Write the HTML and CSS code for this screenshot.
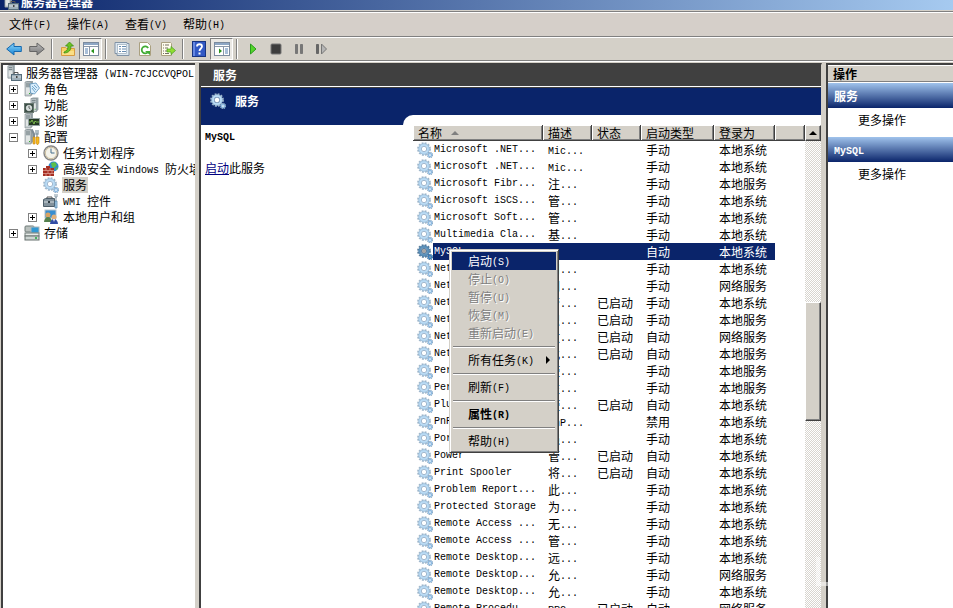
FILE: index.html
```html
<!DOCTYPE html>
<html lang="zh-CN">
<head>
<meta charset="utf-8">
<title>服务器管理器</title>
<link rel="stylesheet" href="styles.css">
</head>
<body>
<svg class="defs" aria-hidden="true">
  <defs>
    <linearGradient id="blue" x2="0" y2="1"><stop offset="0" stop-color="#8fd8fb"/><stop offset="1" stop-color="#1583d6"/></linearGradient>
    <linearGradient id="grey" x2="0" y2="1"><stop offset="0" stop-color="#bbb"/><stop offset="1" stop-color="#777"/></linearGradient>
    <symbol id="gear" viewBox="0 0 16 16">
      <circle cx="7" cy="7" r="6" fill="none" stroke="#9db4c8" stroke-width="1.800" stroke-dasharray="1.880 1.260"/>
      <circle cx="7" cy="7" r="4.200" fill="none" stroke="#b9dbf5" stroke-width="2.600"/>
      <circle cx="7" cy="7" r="5.300" fill="none" stroke="#8fb0cd" stroke-width=".6"/>
      <circle cx="7" cy="7" r="2.700" fill="#fff" stroke="#86a5c1" stroke-width=".8"/>
      <circle cx="13" cy="13" r="2.600" fill="none" stroke="#8eabc5" stroke-width="1.200" stroke-dasharray="1.300 .740"/>
      <circle cx="13" cy="13" r="1.600" fill="#fff" stroke="#8ebbe2" stroke-width="1.500"/>
    </symbol>
    <symbol id="server" viewBox="0 0 16 16">
      <path d="M1 1l2-1h6v13l-2 2H1z" fill="#9aa6aa"/><path d="M1 1h6v14H1z" fill="#c6ced0" stroke="#7c888c" stroke-width=".6"/>
      <path d="M2 3h4M2 5h4" stroke="#667479"/><path d="M2 7h4v6H2z" fill="#e1e5e4"/><path d="M5 12h1v1H5z" fill="#35ad35"/>
    </symbol>
    <symbol id="manager" viewBox="0 0 16 16">
      <use href="#server" width="16" height="14"/><path d="M8 9v-1.500h4V9" fill="none" stroke="#555"/><rect x="5.500" y="9.500" width="10" height="6" fill="#9fb0ba" stroke="#566d7b"/><path d="M6 12h9" stroke="#d5dce0"/><path d="M10 11h1.500v2H10z" fill="#444"/>
    </symbol>
    <symbol id="roles" viewBox="0 0 16 16">
      <use href="#server" width="16" height="16"/><path d="M6 3l6-1 3.500 5-5 6-4-1z" fill="#d9edfb" stroke="#5790bb" stroke-width=".8"/><path d="M8 5l4 4M8 7l3 4M10 4l3 3" stroke="#75a9cc"/>
    </symbol>
    <symbol id="features" viewBox="0 0 16 16">
      <use href="#server" x="6" width="15" height="16"/><rect x=".5" y="6.500" width="9" height="9" fill="#3e5048" stroke="#687770"/><circle cx="5" cy="11" r="2.800" fill="#d3dcda" stroke="#fff" stroke-width=".5"/><path d="M5 9v2l1.500 1" fill="none" stroke="#333" stroke-width=".7"/>
    </symbol>
    <symbol id="diag" viewBox="0 0 16 16">
      <use href="#server" width="16" height="16"/><rect x="4.500" y="5.500" width="11" height="7" fill="#243923" stroke="#95a3a3"/><path d="M5 9h2l1-2 2 4 1-3 1 1h3" fill="none" stroke="#8cd155" stroke-width=".8"/>
    </symbol>
    <symbol id="config" viewBox="0 0 16 16">
      <use href="#server" width="16" height="16"/><path d="M8 1l2 4v9" fill="none" stroke="#7d8b95" stroke-width="2"/><path d="M12 1v4h2V1M13 5v3" fill="none" stroke="#879ba7" stroke-width="1.300"/><path d="M9 8h2v7H9zM12 8h3v6l-1 1.500h-1L12 14z" fill="#f6b921" stroke="#c28317" stroke-width=".6"/>
    </symbol>
    <symbol id="clock" viewBox="0 0 16 16">
      <circle cx="8" cy="8" r="7" fill="#f4f3ea" stroke="#858585" stroke-width="1.400"/><circle cx="8" cy="8" r="5.700" fill="none" stroke="#cdbf9e"/><path d="M8 3.500V8h3.500" fill="none" stroke="#426c8d"/>
    </symbol>
    <symbol id="firewall" viewBox="0 0 16 16">
      <circle cx="10.500" cy="5.500" r="5" fill="#2f88cd"/><path d="M8 2l4-1 2 3-3 3-2-1zM12 8l3-2-1 3z" fill="#5bc04a"/><path d="M0 7h3V5h4v2h4v8H0z" fill="#a62f24"/><path d="M0 9.500h11M0 12.500h11M3 7v2.500M7 7v2.500M5 9.500v3M9 9.500v3M3 12.500V15M7 12.500V15" stroke="#e4aba1" stroke-width=".7"/>
    </symbol>
    <symbol id="wmi" viewBox="0 0 16 16">
      <path d="M4 6V4h5v2" fill="none" stroke="#555"/><path d="M.5 6.500l2-1h9v8H.5z" fill="#82919b" stroke="#4d5e69"/><path d="M1 9h10" stroke="#d1d9dd"/><path d="M5 8h2v2H5z" fill="#303b42"/><path d="M12 1v3h2V1M13 4v4" fill="none" stroke="#8598a5"/><path d="M12 8h2v7h-2z" fill="#b2d5ef" stroke="#467aa2" stroke-width=".7"/>
    </symbol>
    <symbol id="users" viewBox="0 0 16 16">
      <rect x="2" y="1" width="11" height="8" fill="#398fd1" stroke="#b8c3cc"/><circle cx="5" cy="6" r="2.500" fill="#d8a363"/><path d="M1 13c0-3 2-5 4-5s4 2 4 5z" fill="#54804d"/><circle cx="11" cy="8" r="2.500" fill="#e2b17b"/><path d="M7 15c0-3 2-5 4-5s4 2 4 5z" fill="#324da5"/><path d="M10 10l1 3 1-3z" fill="#fff"/>
    </symbol>
    <symbol id="storage" viewBox="0 0 16 16">
      <rect x="1" y="1" width="9" height="6" rx="1" fill="#b9c0bd" stroke="#6d7876"/><rect x="7" y="2" width="8" height="6" fill="#3298d3" stroke="#aab5b9"/><rect x="1" y="8" width="14" height="3" fill="#e6eae8" stroke="#737e7a"/><rect x="1" y="11" width="14" height="4" fill="#cdd5d2" stroke="#66716e"/><path d="M11 13h2" stroke="#1ca83b" stroke-width="1.500"/>
    </symbol>
    <symbol id="back" viewBox="0 0 16 16"><path d="M.7 8L8 2v3.500h7.300v5H8V14z" fill="url(#blue)" stroke="#1769ae"/></symbol>
    <symbol id="forward" viewBox="0 0 16 16"><path d="M15.300 8L8 2v3.500H.7v5H8V14z" fill="url(#grey)" stroke="#666"/></symbol>
    <symbol id="up" viewBox="0 0 16 16"><path d="M1.500 6.500h4l1 1h8v7h-13z" fill="#f8d264" stroke="#d79b42"/><path d="M2 10h12v4H2z" fill="#fbdf86"/><path d="M4 11c3-1 4-3 4-6H5.500L9.500 1l4 4H11c0 4-2 7-7 7z" fill="#6cc323" stroke="#36880f" stroke-width=".7"/></symbol>
    <symbol id="pane" viewBox="0 0 16 16"><rect x=".5" y="1.500" width="15" height="13" fill="#fff" stroke="#7c8b9e"/><path d="M1 2h14v2H1z" fill="#8ea7c5"/><path d="M1 5.500h14M6.500 6v8" stroke="#8b98aa"/><path d="M2 8h3M2 10h3M2 12h3" stroke="#527fb0"/><path d="M11 7.500v5L8 10z" fill="#29931c"/></symbol>
    <symbol id="props" viewBox="0 0 16 16"><path d="M1 1.500h12v1h2v12H3v-2H1z" fill="#dce7f0" stroke="#8193a6"/><rect x="3.500" y="3.500" width="9" height="9" fill="#fff" stroke="#9aabba" stroke-width=".7"/><path d="M5 5.500h2M8 5.500h4M5 8h2M8 8h4M5 10.500h2M8 10.500h4" stroke="#668bb0"/></symbol>
    <symbol id="refresh" viewBox="0 0 16 16"><path d="M2.500 1.500h8l3 3v10h-11z" fill="#fff" stroke="#aaa080"/><path d="M11.200 7A3.500 3.500 0 1 0 11 11" fill="none" stroke="#42ac35" stroke-width="1.800"/><path d="M8 10h5v4z" fill="#42ac35"/></symbol>
    <symbol id="export" viewBox="0 0 16 16"><path d="M1.500 1.500h9l1 1v12h-10z" fill="#fffdec" stroke="#aaa080"/><path d="M3 4h1M5 4h4M3 7h1M5 7h3M3 10h1M5 10h3M3 12.500h1M5 12.500h4" stroke="#776f65"/><path d="M7 8h4V5.500L15.500 9.500 11 13.500V11H7z" fill="#91dd32" stroke="#459d20" stroke-width=".7"/></symbol>
    <symbol id="help" viewBox="0 0 16 16"><rect x="1.500" y=".5" width="13" height="15" fill="#3259c4" stroke="#173481"/><path d="M2 1h2v14H2z" fill="#6587e1"/><path d="M6 5.500c0-3 5-3 5 0 0 2-2.500 2-2.500 4.500" fill="none" stroke="#fff" stroke-width="1.800"/><path d="M7.500 11.500h2v2h-2z" fill="#fff"/></symbol>
    <symbol id="play" viewBox="0 0 16 16"><path d="M5.500 3v10l5.500-5z" fill="#55d52b" stroke="#299c1e"/></symbol>
    <symbol id="stop" viewBox="0 0 16 16"><rect x="3" y="3" width="10" height="10" rx="1" fill="#3d3d3d" stroke="#777"/></symbol>
    <symbol id="pause" viewBox="0 0 16 16"><path d="M4.500 3.500h2v9h-2zM9.500 3.500h2v9h-2z" fill="#777" stroke="#777"/></symbol>
    <symbol id="restart" viewBox="0 0 16 16"><path d="M2.500 3.500h2v9h-2z" fill="#666" stroke="#666"/><path d="M7.500 3v10l5-5z" fill="#b5b5b5" stroke="#777"/></symbol>
  </defs>
</svg>

<header class="title"><svg class="icon"><use href="#manager"/></svg><h1>服务器管理器</h1></header>

<nav class="menubar">
  <button>文件<span class="en">(F)</span></button>
  <button>操作<span class="en">(A)</span></button>
  <button>查看<span class="en">(V)</span></button>
  <button>帮助<span class="en">(H)</span></button>
</nav>

<div class="toolbar">
  <button aria-label="后退"><svg class="icon"><use href="#back"/></svg></button>
  <button aria-label="前进"><svg class="icon"><use href="#forward"/></svg></button>
  <i class="divider"></i>
  <button aria-label="向上"><svg class="icon"><use href="#up"/></svg></button>
  <button class="pressed" aria-label="控制台树"><svg class="icon"><use href="#pane"/></svg></button>
  <i class="divider"></i>
  <button aria-label="属性"><svg class="icon"><use href="#props"/></svg></button>
  <button aria-label="刷新"><svg class="icon"><use href="#refresh"/></svg></button>
  <button aria-label="导出列表"><svg class="icon"><use href="#export"/></svg></button>
  <i class="divider"></i>
  <button aria-label="帮助"><svg class="icon"><use href="#help"/></svg></button>
  <button class="pressed" aria-label="操作窗格"><svg class="icon flip"><use href="#pane"/></svg></button>
  <i class="divider"></i>
  <button aria-label="启动服务"><svg class="icon"><use href="#play"/></svg></button>
  <button aria-label="停止服务"><svg class="icon"><use href="#stop"/></svg></button>
  <button aria-label="暂停服务"><svg class="icon"><use href="#pause"/></svg></button>
  <button aria-label="重新启动服务"><svg class="icon"><use href="#restart"/></svg></button>
</div>

<main class="workspace">
  <aside class="tree">
    <ul>
      <li class="root"><svg class="icon"><use href="#manager"/></svg><span>服务器管理器<span class="en"> (WIN-7CJCCVQPOL</span></span></li>
      <li><button class="toggle" aria-label="展开"></button><svg class="icon"><use href="#roles"/></svg><span>角色</span></li>
      <li><button class="toggle" aria-label="展开"></button><svg class="icon"><use href="#features"/></svg><span>功能</span></li>
      <li><button class="toggle" aria-label="展开"></button><svg class="icon"><use href="#diag"/></svg><span>诊断</span></li>
      <li><button class="toggle open" aria-label="折叠"></button><svg class="icon"><use href="#config"/></svg><span>配置</span></li>
      <li class="sub"><button class="toggle" aria-label="展开"></button><svg class="icon"><use href="#clock"/></svg><span>任务计划程序</span></li>
      <li class="sub"><button class="toggle" aria-label="展开"></button><svg class="icon"><use href="#firewall"/></svg><span>高级安全<span class="en"> Windows </span>防火墙</span></li>
      <li class="sub"><i class="leaf"></i><svg class="icon"><use href="#gear"/></svg><span class="current">服务</span></li>
      <li class="sub"><i class="leaf"></i><svg class="icon"><use href="#wmi"/></svg><span><span class="en">WMI </span>控件</span></li>
      <li class="sub"><button class="toggle" aria-label="展开"></button><svg class="icon"><use href="#users"/></svg><span>本地用户和组</span></li>
      <li><button class="toggle" aria-label="展开"></button><svg class="icon"><use href="#storage"/></svg><span>存储</span></li>
    </ul>
  </aside>

  <section class="center">
    <h2 class="heading">服务</h2>
    <div class="banner"><svg class="icon"><use href="#gear"/></svg><strong>服务</strong></div>
    <div class="content">
      <div class="detail">
        <h3><span class="en">MySQL</span></h3>
        <p><a href="#start">启动</a>此服务</p>
      </div>
      <div class="list">
        <table>
          <colgroup><col class="c-name"><col class="c-small"><col class="c-small"><col class="c-type"><col class="c-login"><col></colgroup>
          <thead><tr><th>名称<i class="sort"></i></th><th>描述</th><th>状态</th><th>启动类型</th><th>登录为</th><th></th></tr></thead>
          <tbody id="services"></tbody>
        </table>
        <div class="scroll"><button aria-label="向上滚动"></button><div class="track"><div class="thumb"></div></div></div>
      </div>
    </div>
  </section>

  <aside class="actions">
    <h2>操作</h2>
    <h3>服务</h3>
    <a href="#more">更多操作</a>
    <h3><span class="en">MySQL</span></h3>
    <a href="#more">更多操作</a>
  </aside>
</main>

<div class="menu" role="menu">
  <button class="active">启动<span class="en">(S)</span></button>
  <button disabled>停止<span class="en">(O)</span></button>
  <button disabled>暂停<span class="en">(U)</span></button>
  <button disabled>恢复<span class="en">(M)</span></button>
  <button disabled>重新启动<span class="en">(E)</span></button>
  <hr>
  <button class="more">所有任务<span class="en">(K)</span></button>
  <hr>
  <button>刷新<span class="en">(F)</span></button>
  <hr>
  <button class="default">属性<span class="en">(R)</span></button>
  <hr>
  <button>帮助<span class="en">(H)</span></button>
</div>
<div class="mark"></div>
<script src="services.js"></script>
</body>
</html>
```

FILE: styles.css
```css
* { box-sizing: border-box; }

body {
  margin: 0;
  height: 100vh;
  display: flex;
  flex-direction: column;
  overflow: hidden;
  background: #d4d0c8;
  color: #000;
  font: 12px/16px "Noto Sans CJK SC", sans-serif;
}

h1, h2, h3, p, ul { margin: 0; padding: 0; font-size: 12px; }
button { padding: 0; border: 0; background: none; color: inherit; font: inherit; }
.en { font-family: "Liberation Mono", monospace; font-size: 10px; line-height: 10px; vertical-align: 1px; white-space: pre; }
.defs { position: absolute; width: 0; height: 0; }
.icon { flex: none; width: 16px; height: 16px; display: block; }
.flip { transform: scaleX(-1); }

.title {
  display: flex;
  align-items: flex-end;
  gap: 2px;
  flex: none;
  height: 10px;
  padding-left: 3px;
  overflow: hidden;
  color: #fff;
  background: linear-gradient(90deg, #0a246a, #a6caf0);
}
.title h1 { line-height: 16px; }

.menubar {
  display: flex;
  flex: none;
  height: 26px;
  margin-top: 1px;
  padding-left: 1px;
  border-top: 1px solid #808080;
  border-bottom: 1px solid #808080;
  box-shadow: inset 0 1px #fff;
  background: #d5cfc9;
}
.menubar button { padding: 0 8px; white-space: nowrap; }

.toolbar {
  display: flex;
  align-items: center;
  flex: none;
  height: 24px;
  padding-left: 2px;
  border-top: 1px solid #fff;
  border-bottom: 1px solid #808080;
}
.toolbar button { display: grid; place-items: center; width: 23px; height: 22px; }
.toolbar .pressed { border: 1px solid; border-color: #808080 #fff #fff #808080; background: #eae8e4; }
.divider { width: 2px; height: 20px; margin: 0 3px; border-left: 1px solid #808080; border-right: 1px solid #fff; }

.workspace {
  flex: 1;
  min-height: 0;
  display: grid;
  grid-template-columns: 194px minmax(0, 1fr) 127px;
  gap: 4px;
  padding: 1px 0 0 1px;
  border-top: 1px solid #fff;
}
.workspace > * { overflow: hidden; border-top: 2px solid #404040; border-left: 2px solid #404040; background: #fff; }

.tree ul { list-style: none; }
.tree li { display: flex; align-items: center; height: 16px; padding-left: 6px; gap: 4px; white-space: nowrap; }
.tree .root { padding-left: 3px; }
.tree .sub { padding-left: 25px; }
.toggle, .leaf { flex: none; width: 9px; height: 9px; margin-right: 2px; }
.toggle {
  border: 1px solid #808080;
  background: linear-gradient(#000, #000) center / 5px 1px no-repeat, linear-gradient(#000, #000) center / 1px 5px no-repeat;
}
.toggle.open { background: linear-gradient(#000, #000) center / 5px 1px no-repeat; }
.current { padding: 0 1px; margin-left: -1px; background: #d4d0c8; }

.center { display: flex; flex-direction: column; border-right: 1px solid #d4d0c8; }
.heading { flex: none; height: 21px; padding-left: 12px; line-height: 20px; color: #fff; background: #404040; }
.banner {
  display: flex;
  align-items: flex-start;
  gap: 9px;
  flex: none;
  height: 38px;
  margin-top: 1px;
  padding: 5px 9px;
  border-top: 1px solid #404040;
  color: #fff;
  background: #0a246a;
}
.content { flex: 1; min-height: 0; display: grid; grid-template-columns: 202px minmax(0, 1fr); }
.detail { padding: 3px 4px; }
.detail h3 { margin-bottom: 16px; line-height: 16px; }
.detail a { color: #00007f; }
.list {
  display: flex;
  min-width: 0;
  margin-top: -10px;
  padding: 10px 0 0 10px;
  border-top-left-radius: 10px;
  background: #fff;
}

table { flex: 1; width: 0; height: 0; table-layout: fixed; border-collapse: separate; border-spacing: 0; }
.c-name { width: 130px; }
.c-small { width: 49px; }
.c-type { width: 73px; }
.c-login { width: 61px; }
th {
  height: 16px;
  padding: 0 5px;
  border-right: 1px solid #404040;
  border-bottom: 1px solid #404040;
  box-shadow: inset 1px 1px #fff, inset -1px -1px #808080;
  background: #d4d0c8;
  font-weight: 400;
  line-height: 15px;
  text-align: left;
  white-space: nowrap;
}
.sort { display: inline-block; margin-left: 9px; border: 4px solid transparent; border-top: 0; border-bottom-color: #808080; vertical-align: 3px; }
td { height: 17px; padding: 0 5px; line-height: 17px; white-space: nowrap; }
td:first-child { padding: 0 0 0 4px; }
.name { display: flex; align-items: center; height: 17px; }
.name span { flex: 1; height: 17px; padding-left: 1px; line-height: 17px; }
.selected { color: #fff; }
.selected .name span, .selected td:not(:first-child):not(:last-child) { background: #0a246a; }
.selected .icon { filter: brightness(.65) saturate(2.4); }

.scroll { display: flex; flex-direction: column; flex: none; width: 16px; }
.scroll button, .thumb { border: 1px solid; border-color: #fff #404040 #404040 #fff; box-shadow: inset -1px -1px #808080; background: #d4d0c8; }
.scroll button { display: grid; place-items: center; height: 16px; }
.scroll button::after { content: ""; border: 4px solid transparent; border-top: 0; border-bottom-color: #000; }
.track { flex: 1; padding-top: 161px; background: repeating-conic-gradient(#d8d5cf 0 25%, #fff 0 50%) 0 0 / 2px 2px; }
.thumb { height: 119px; }

.actions h2 { height: 17px; padding-left: 5px; border-top: 1px solid #fff; border-bottom: 1px solid #808080; line-height: 15px; background: #d4d0c8; }
.actions h3 { height: 25px; margin-top: 1px; padding-left: 6px; line-height: 25px; color: #fff; background: linear-gradient(#a0c3ec, #0a246a); }
.actions a { display: block; height: 28px; padding-left: 30px; line-height: 24px; color: #000; text-decoration: none; }

.menu {
  position: absolute;
  left: 449px;
  top: 249px;
  display: flex;
  flex-direction: column;
  width: 110px;
  padding: 2px 1px;
  border: 1px solid;
  border-color: #d4d0c8 #404040 #404040 #d4d0c8;
  box-shadow: inset 1px 1px #fff, inset -1px -1px #808080;
  background: #d4d0c8;
}
.menu button { height: 18px; margin: 0 1px; padding-left: 16px; line-height: 18px; text-align: left; white-space: nowrap; }
.menu .active { color: #fff; background: #0a246a; }
.menu :disabled { color: #808080; text-shadow: 1px 1px #fff; }
.menu .default { font-weight: 700; }
.menu .more::after { content: ""; float: right; margin: 5px 6px 0 0; border: 4px solid transparent; border-right: 0; border-left-color: #000; }
.menu hr { width: auto; height: 2px; margin: 4px 2px 3px; border: 0; border-top: 1px solid #808080; border-bottom: 1px solid #fff; }

.mark { position: absolute; left: 816px; top: 557px; width: 12px; height: 29px; border-left: 4px solid #fff; border-bottom: 4px solid #fff; opacity: .5; }
```

FILE: services.js
```js
const services = [
  ["Microsoft .NET...", "Mic...", "", "手动", "本地系统"],
  ["Microsoft .NET...", "Mic...", "", "手动", "本地系统"],
  ["Microsoft Fibr...", "注...", "", "手动", "本地服务"],
  ["Microsoft iSCS...", "管...", "", "手动", "本地系统"],
  ["Microsoft Soft...", "管...", "", "手动", "本地系统"],
  ["Multimedia Cla...", "基...", "", "手动", "本地系统"],
  ["MySQL", "", "", "自动", "本地系统"],
  ["Netlogon", "用...", "", "手动", "本地系统"],
  ["Network Access...", "网...", "", "手动", "网络服务"],
  ["Network Connec...", "管...", "已启动", "手动", "本地系统"],
  ["Network List S...", "识...", "已启动", "手动", "本地服务"],
  ["Network Locati...", "收...", "已启动", "自动", "网络服务"],
  ["Network Store ...", "此...", "已启动", "自动", "本地服务"],
  ["Performance Co...", "使...", "", "手动", "本地服务"],
  ["Performance Lo...", "性...", "", "手动", "本地服务"],
  ["Plug and Play", "使...", "已启动", "自动", "本地系统"],
  ["PnP-X IP Bus E...", "PnP...", "", "禁用", "本地系统"],
  ["Portable Devic...", "强...", "", "手动", "本地系统"],
  ["Power", "管...", "已启动", "自动", "本地系统"],
  ["Print Spooler", "将...", "已启动", "自动", "本地系统"],
  ["Problem Report...", "此...", "", "手动", "本地系统"],
  ["Protected Storage", "为...", "", "手动", "本地系统"],
  ["Remote Access ...", "无...", "", "手动", "本地系统"],
  ["Remote Access ...", "管...", "", "手动", "本地系统"],
  ["Remote Desktop...", "远...", "", "手动", "本地系统"],
  ["Remote Desktop...", "允...", "", "手动", "网络服务"],
  ["Remote Desktop...", "允...", "", "手动", "本地系统"],
  ["Remote Procedu...", "RPC...", "已启动", "自动", "网络服务"]
];

const latin = text => text.replace(/[\x20-\x7e]+/g, part => `<span class="en">${part}</span>`);

document.getElementById("services").innerHTML = services.map(([name, ...rest]) => `
  <tr class="${name === "MySQL" ? "selected" : ""}">
    <td><div class="name"><svg class="icon"><use href="#gear"/></svg><span class="en">${name}</span></div></td>
    ${rest.map(text => `<td>${latin(text)}</td>`).join("")}
    <td></td>
  </tr>`).join("");
```
